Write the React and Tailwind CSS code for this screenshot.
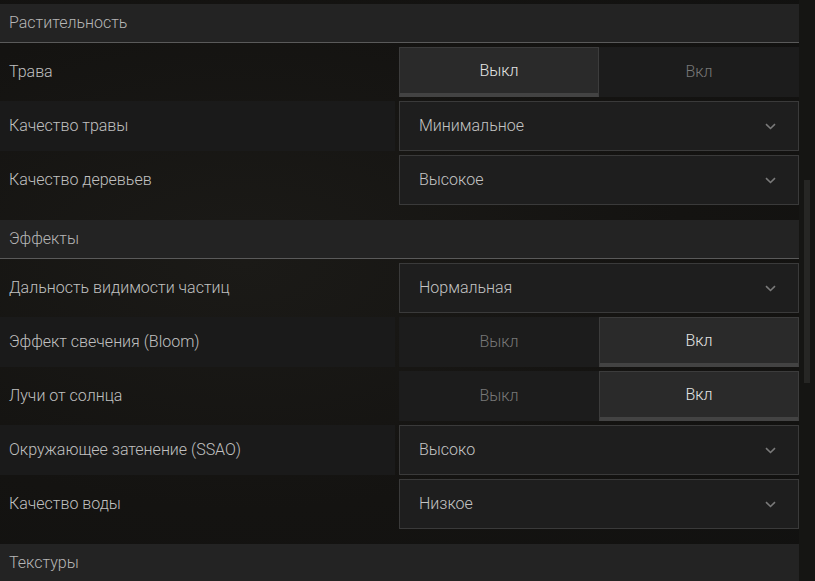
import React from "react";

const sections = [
  {
    title: "Растительность",
    rows: [
      { label: "Трава", type: "toggle", on: false },
      { label: "Качество травы", type: "select", value: "Минимальное" },
      { label: "Качество деревьев", type: "select", value: "Высокое" },
    ],
  },
  {
    title: "Эффекты",
    rows: [
      { label: "Дальность видимости частиц", type: "select", value: "Нормальная" },
      { label: "Эффект свечения (Bloom)", type: "toggle", on: true },
      { label: "Лучи от солнца", type: "toggle", on: true },
      { label: "Окружающее затенение (SSAO)", type: "select", value: "Высоко" },
      { label: "Качество воды", type: "select", value: "Низкое" },
    ],
  },
  { title: "Текстуры", rows: [] },
];

function ToggleHalf({ text, active }) {
  return active ? (
    <button className="w-1/2 h-full flex items-center justify-center bg-[#2a2a2a] border border-[#3c3c3c] border-b-4 border-b-[#434343] text-[#e4e4e4]">
      {text}
    </button>
  ) : (
    <button className="w-1/2 h-full flex items-center justify-center bg-[#1c1c1c] text-[#787878]">
      {text}
    </button>
  );
}

function Toggle({ on }) {
  return (
    <div className="w-[400px] h-[50px] flex">
      <ToggleHalf text="Выкл" active={!on} />
      <ToggleHalf text="Вкл" active={on} />
    </div>
  );
}

function Select({ value }) {
  return (
    <div className="w-[400px] h-[50px] flex items-center justify-between pl-[19px] pr-[22px] bg-[#1e1e1e] border border-[#3a3a3a] text-[#c4c4c4]">
      <span>{value}</span>
      <svg width="11" height="7" viewBox="0 0 11 7" fill="none">
        <path d="M1 1.2L5.5 5.5L10 1.2" stroke="#7a7a7a" strokeWidth="1.6" />
      </svg>
    </div>
  );
}

function SettingRow({ row, alt }) {
  return (
    <div className="h-[54px] pt-1 flex gap-1">
      <div
        className={
          alt
            ? "w-[395px] h-[50px] flex items-center pl-[9px] bg-[#1a1a1a] text-[#c0c0c0]"
            : "w-[395px] h-[50px] flex items-center pl-[9px] text-[#c0c0c0]"
        }
      >
        {row.label}
      </div>
      {row.type === "toggle" ? <Toggle on={row.on} /> : <Select value={row.value} />}
    </div>
  );
}

export default function App() {
  return (
    <div className="w-[815px] h-[581px] overflow-hidden flex bg-[#131211] bg-[radial-gradient(ellipse_at_30%_45%,#1b1a17_0%,#141311_55%,#111110_100%)] font-['Roboto','Noto_Sans',sans-serif] text-[16px] font-light">
      <div className="w-[799px] pt-1 flex flex-col">
        {sections.map((s) => (
          <section key={s.title} className="mb-[15px]">
            <div className="h-[39px] flex items-center px-[9px] bg-[#232323] border-b border-[#5a5a5a] text-[#b6b6b6]">
              {s.title}
            </div>
            {s.rows.map((row, i) => (
              <SettingRow key={row.label} row={row} alt={i % 2 === 1} />
            ))}
          </section>
        ))}
      </div>

      {/* scrollbar */}
      <div className="w-4 h-full bg-[#151513] pt-[180px] pl-[5px]">
        <div className="w-[6px] h-[203px] bg-[#262624]" />
      </div>
    </div>
  );
}
